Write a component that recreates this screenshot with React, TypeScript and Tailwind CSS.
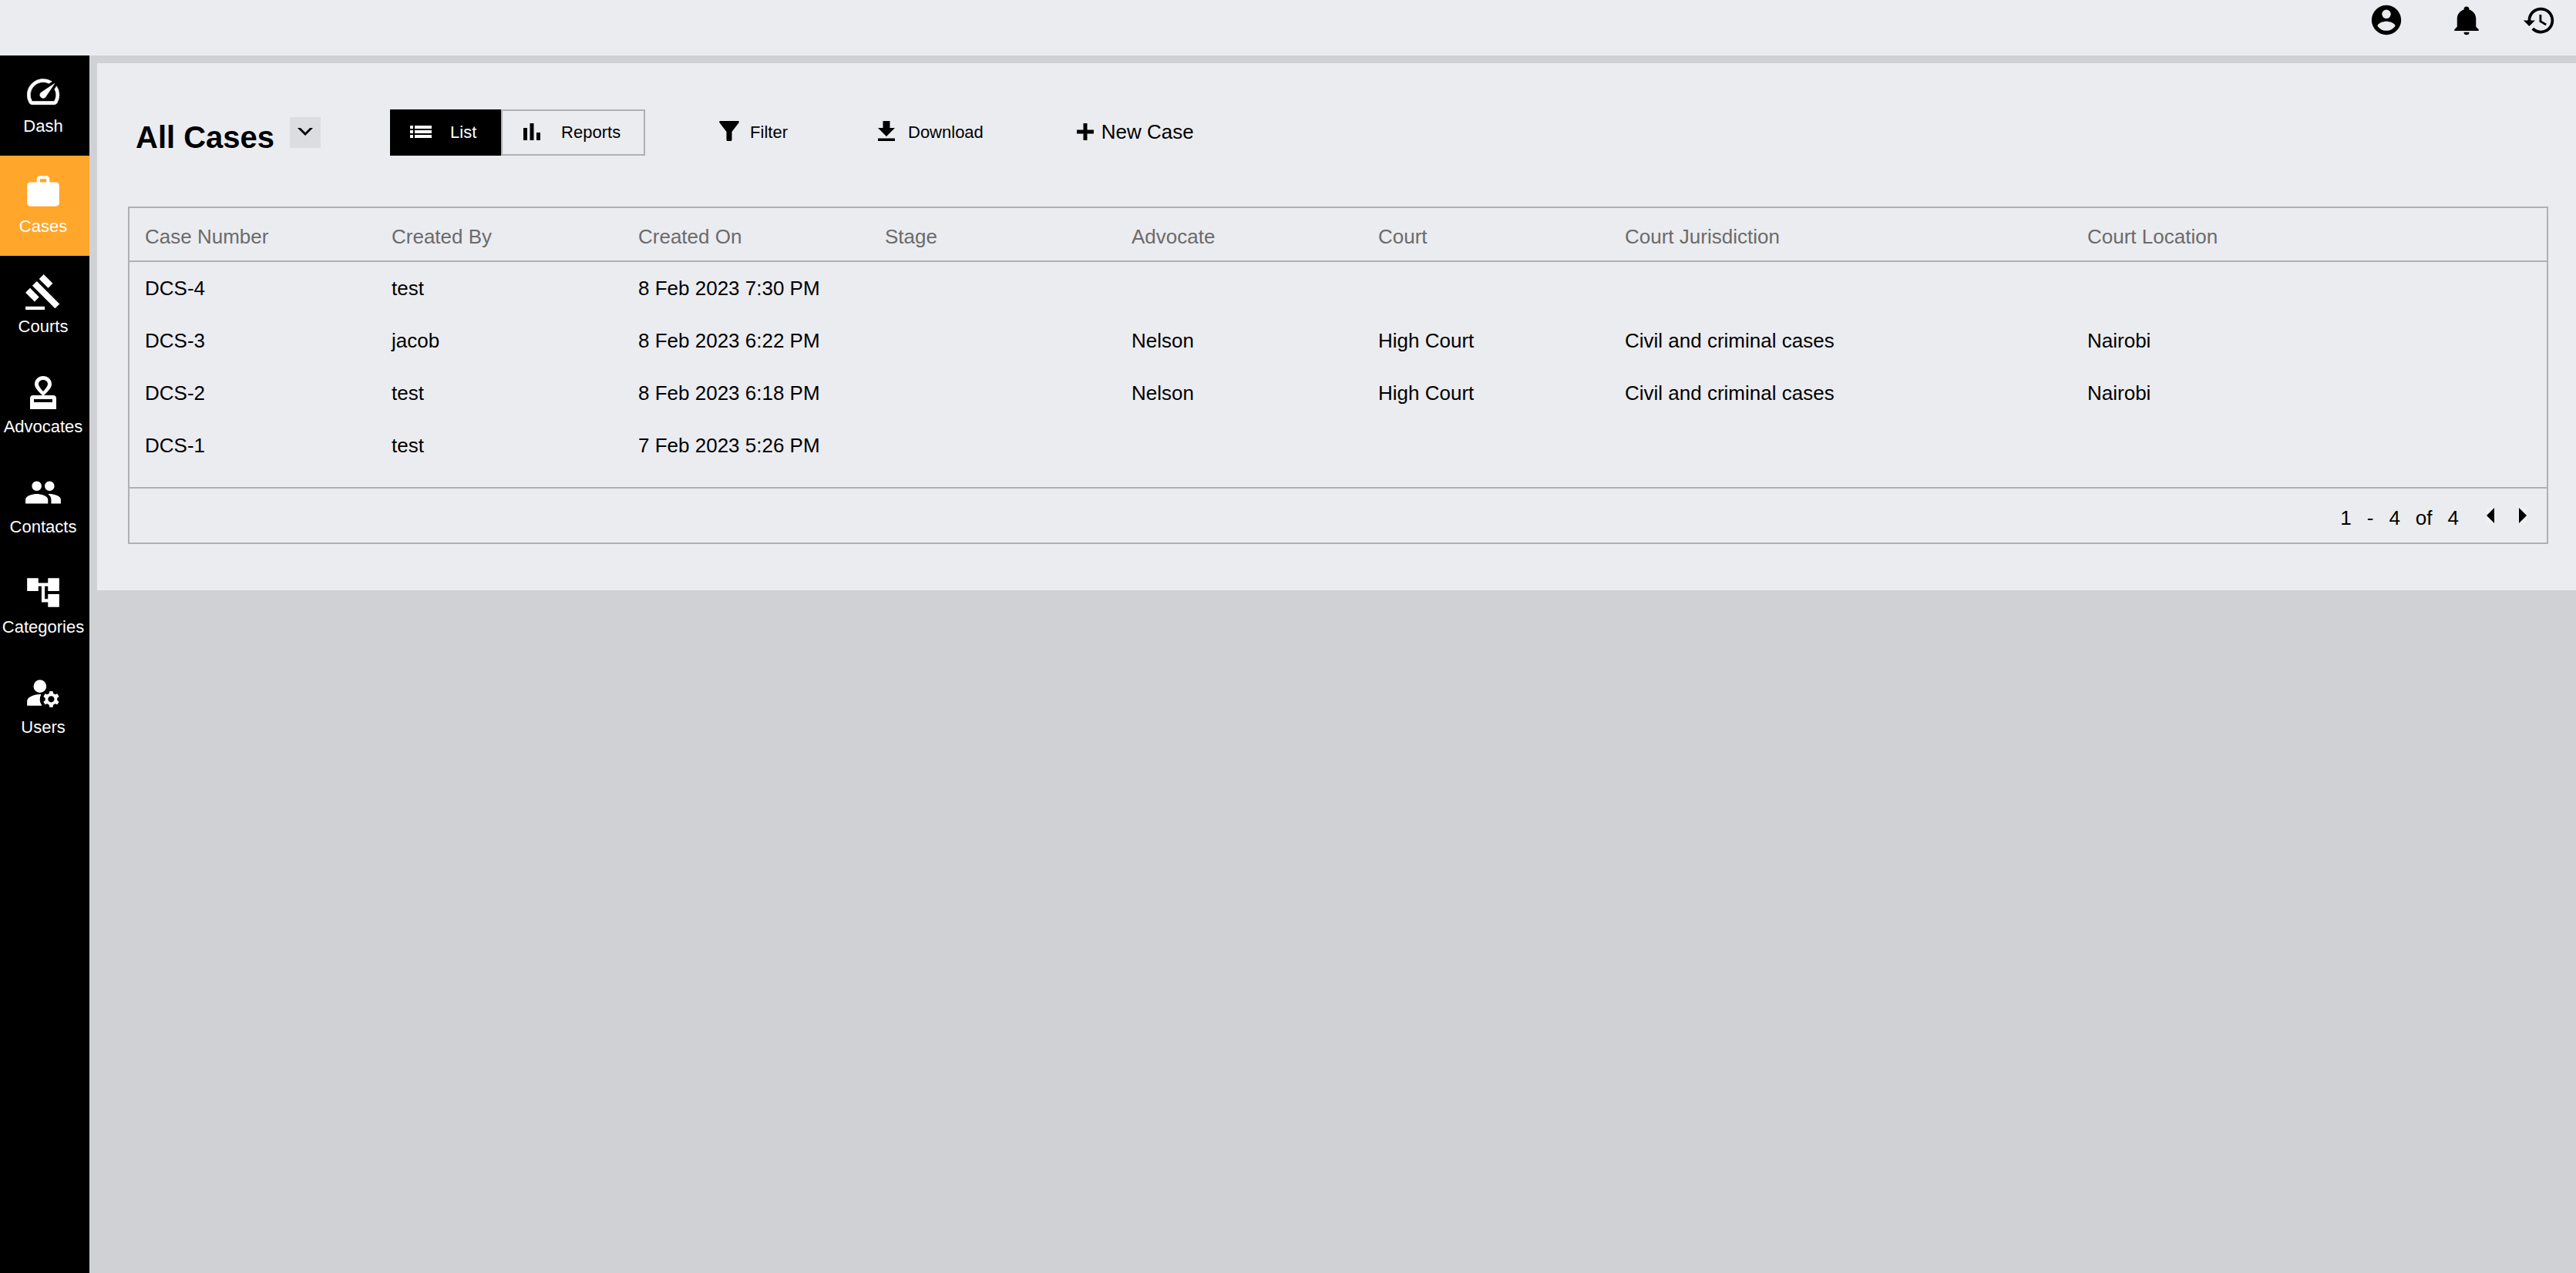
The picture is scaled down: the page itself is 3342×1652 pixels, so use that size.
import type { ReactNode } from 'react';
import { MdAccountTree, MdGavel, MdManageAccounts, MdPeople, MdWork } from 'react-icons/md';

const navItems: { label: string; icon: ReactNode; active?: boolean }[] = [
  { label: 'Dash', icon: <GaugeIcon /> },
  { label: 'Cases', icon: <MdWork className="size-[50px]" />, active: true },
  { label: 'Courts', icon: <MdGavel className="size-[50px]" /> },
  { label: 'Advocates', icon: <StampIcon /> },
  { label: 'Contacts', icon: <MdPeople className="size-[50px]" /> },
  { label: 'Categories', icon: <MdAccountTree className="size-[50px]" /> },
  { label: 'Users', icon: <MdManageAccounts className="size-[50px]" /> },
];

const columns = [
  'Case Number',
  'Created By',
  'Created On',
  'Stage',
  'Advocate',
  'Court',
  'Court Jurisdiction',
  'Court Location',
];

const rows = [
  ['DCS-4', 'test', '8 Feb 2023 7:30 PM', '', '', '', '', ''],
  ['DCS-3', 'jacob', '8 Feb 2023 6:22 PM', '', 'Nelson', 'High Court', 'Civil and criminal cases', 'Nairobi'],
  ['DCS-2', 'test', '8 Feb 2023 6:18 PM', '', 'Nelson', 'High Court', 'Civil and criminal cases', 'Nairobi'],
  ['DCS-1', 'test', '7 Feb 2023 5:26 PM', '', '', '', '', ''],
];

function GaugeIcon() {
  return (
    <svg viewBox="0 0 24 24" className="size-[50px]" fill="currentColor" stroke="currentColor" strokeWidth="0.3">
      <path d="M20.380 8.570l-1.230 1.850a8 8 0 0 1-.22 7.580H5.070A8 8 0 0 1 15.580 6.850l1.850-1.230A10 10 0 0 0 3.350 19a2 2 0 0 0 1.720 1h13.850a2 2 0 0 0 1.740-1 10 10 0 0 0-.27-10.440z" />
      <path d="M10.590 15.410a2 2 0 0 0 2.830 0l5.660-8.490-8.490 5.660a2 2 0 0 0 0 2.830z" />
    </svg>
  );
}

function StampIcon() {
  return (
    <svg viewBox="0 0 50 50" className="size-[50px]" fill="currentColor">
      <path
        fillRule="evenodd"
        d="M8 47V33a4 4 0 0 1 4-4h26a4 4 0 0 1 4 4v14zM13 34v4h24v-4z"
      />
      <path
        fillRule="evenodd"
        d="M25 4c-6 0-11 4.500-11 10.500 0 4 3.500 8.500 11 15.500 7.500-7 11-11.500 11-15.500C36 8.500 31 4 25 4zM25 9c3.400 0 6 2.300 6 5.500 0 2-2 5-6 9.500-4-4.500-6-7.500-6-9.500 0-3.200 2.600-5.500 6-5.500z"
      />
    </svg>
  );
}

function HeaderButton({ label, path, className }: { label: string; path: string; className: string }) {
  return (
    <button type="button" aria-label={label}>
      <svg viewBox="0 0 24 24" fill="currentColor" className={className}>
        <path d={path} />
      </svg>
    </button>
  );
}

function Header() {
  return (
    <header className="flex h-[72px] shrink-0 items-start justify-end bg-[#ebecf0] pt-[3px] pr-[25px]">
      <div className="flex h-[46px] items-center">
        <HeaderButton
          label="Account"
          className="mr-[60px] size-[46px]"
          path="M12 19.2c-2.5 0-4.71-1.28-6-3.2.03-2 4-3.1 6-3.1s5.97 1.1 6 3.1c-1.29 1.92-3.5 3.2-6 3.2M12 5a3 3 0 0 1 3 3 3 3 0 0 1-3 3 3 3 0 0 1-3-3 3 3 0 0 1 3-3m0-3A10 10 0 0 0 2 12a10 10 0 0 0 10 10 10 10 0 0 0 10-10A10 10 0 0 0 12 2z"
        />
        <HeaderButton
          label="Notifications"
          className="mr-[51px] size-[42px]"
          path="M21 19v1H3v-1l2-2v-6c0-3.1 2.03-5.83 5-6.71V4a2 2 0 0 1 2-2 2 2 0 0 1 2 2v.29c2.97.88 5 3.61 5 6.71v6l2 2m-7 2a2 2 0 0 1-2 2 2 2 0 0 1-2-2"
        />
        <HeaderButton
          label="History"
          className="size-[45px]"
          path="M13.5 8H12v5l4.28 2.54.72-1.21-3.5-2.08V8M13 3a9 9 0 0 0-9 9H1l3.96 4.03L9 12H6a7 7 0 0 1 7-7 7 7 0 0 1 7 7 7 7 0 0 1-7 7c-1.93 0-3.68-.79-4.94-2.06l-1.42 1.42A8.896 8.896 0 0 0 13 21a9 9 0 0 0 9-9 9 9 0 0 0-9-9"
        />
      </div>
    </header>
  );
}

function Sidebar() {
  return (
    <nav className="w-[116px] shrink-0 bg-black text-white">
      {navItems.map(({ label, icon, active }) => (
        <a
          key={label}
          href={`#${label.toLowerCase()}`}
          aria-current={active ? 'page' : undefined}
          className={`flex h-[130px] flex-col items-center gap-1 pt-[22px] pr-1 text-[22px] leading-8 ${active ? 'bg-[#ffa62b]' : ''}`}
        >
          {icon}
          {label}
        </a>
      ))}
    </nav>
  );
}

function ToolbarButton({ icon, label, className }: { icon: ReactNode; label: string; className: string }) {
  return (
    <button type="button" className={`flex h-[60px] items-center pb-[2px] ${className}`}>
      {icon}
      {label}
    </button>
  );
}

function Toolbar() {
  return (
    <div className="flex items-start pt-[60px] pl-[50px] text-[22px]">
      <h1 className="pt-[13px] text-[40px] leading-[46px] font-bold">All Cases</h1>
      <button
        type="button"
        aria-label="Choose view"
        className="mt-[10px] ml-5 flex size-10 items-center justify-center bg-[#dcdde0] pb-[2px]"
      >
        <svg viewBox="0 0 20 10" className="h-[10px] w-5" fill="currentColor">
          <path d="M0 0h4l6 6 6-6h4L10 10z" />
        </svg>
      </button>
      <div className="ml-[90px] flex h-[60px]">
        <button type="button" className="flex w-[144px] items-center gap-6 bg-black pb-[2px] pl-[26px] text-white">
          <svg viewBox="0 0 28 16" className="h-4 w-7" fill="currentColor">
            <path d="M0 0h4v4H0zM6 0h22v4H6zM0 6h4v4H0zM6 6h22v4H6zM0 12h4v4H0zM6 12h22v4H6z" />
          </svg>
          List
        </button>
        <button
          type="button"
          className="flex w-[187px] items-center gap-[27px] border-2 border-[#afb0b4] pb-[2px] pl-[27px]"
        >
          <svg viewBox="0 0 22 22" className="size-[22px]" fill="currentColor">
            <path d="M0 6h5v16H0zM8.500 0h5v22h-5zM17 12h5v10h-5z" />
          </svg>
          Reports
        </button>
      </div>
      <ToolbarButton
        className="ml-24 gap-[14px]"
        label="Filter"
        icon={
          <svg viewBox="0 0 26 26" className="mb-[3px] size-[26px]" fill="currentColor">
            <path d="M1.500 0h23c1.300 0 1.800 1.300 1 2.300L16.500 14v10.500c0 .8-.7 1.500-1.500 1.500h-4c-.8 0-1.500-.7-1.500-1.500V14L.5 2.300C-.3 1.300.2 0 1.500 0z" />
          </svg>
        }
      />
      <ToolbarButton
        className="ml-[117px] gap-[17px]"
        label="Download"
        icon={
          <svg viewBox="0 0 22 26" className="mb-[3px] h-[26px] w-[22px]" fill="currentColor">
            <path d="M6.500 0h9v9H22L11 20 0 9h6.500zM0 22.500h22V26H0z" />
          </svg>
        }
      />
      <ToolbarButton
        className="ml-[121px] gap-[10px] text-[26px]"
        label="New Case"
        icon={
          <svg viewBox="0 0 22 22" className="size-[22px]" fill="currentColor">
            <path d="M8.500 0h5v8.500H22v5h-8.500V22h-5v-8.500H0v-5h8.500z" />
          </svg>
        }
      />
    </div>
  );
}

function CaseTable() {
  return (
    <div className="mt-[66px] mr-9 ml-10 border-2 border-[#afb0b4] text-[26px] leading-8">
      <table className="w-full table-fixed border-separate border-spacing-0 text-left">
        <colgroup>
          <col className="w-[320px]" />
          <col className="w-[320px]" />
          <col className="w-[320px]" />
          <col className="w-[320px]" />
          <col className="w-[320px]" />
          <col className="w-[320px]" />
          <col className="w-[600px]" />
          <col />
        </colgroup>
        <thead>
          <tr className="h-[70px]">
            {columns.map((column) => (
              <th
                key={column}
                scope="col"
                className="border-b-2 border-[#afb0b4] px-5 pt-[6px] font-normal text-[#6b6b6b]"
              >
                {column}
              </th>
            ))}
          </tr>
        </thead>
        <tbody>
          {rows.map((row) => (
            <tr key={row[0]} className="h-[68px]">
              {row.map((cell, index) => (
                <td key={columns[index]} className="px-5">
                  {cell}
                </td>
              ))}
            </tr>
          ))}
        </tbody>
      </table>
      <div className="mt-5 flex h-[72px] items-center justify-end border-t-2 border-[#afb0b4] pr-[26px]">
        <div className="flex gap-5 pt-[6px]">
          <span>1</span>
          <span>-</span>
          <span>4</span>
          <span>of</span>
          <span>4</span>
        </div>
        <button type="button" aria-label="Previous page" className="ml-9 bg-[#f1f1f2]">
          <svg viewBox="0 0 10 20" className="h-5 w-[10px]">
            <path d="M10 0v20L0 10z" />
          </svg>
        </button>
        <button type="button" aria-label="Next page" className="ml-8 bg-[#f1f1f2]">
          <svg viewBox="0 0 10 20" className="h-5 w-[10px]">
            <path d="M0 0v20l10-10z" />
          </svg>
        </button>
      </div>
    </div>
  );
}

export default function App() {
  return (
    <div className="flex min-h-screen flex-col bg-[#d0d1d5] font-['Liberation_Sans',Arial,sans-serif] text-black">
      <Header />
      <div className="flex grow">
        <Sidebar />
        <main className="grow pt-[10px] pl-[10px]">
          <section className="bg-[#ebecf0] pb-[60px]">
            <Toolbar />
            <CaseTable />
          </section>
        </main>
      </div>
    </div>
  );
}
